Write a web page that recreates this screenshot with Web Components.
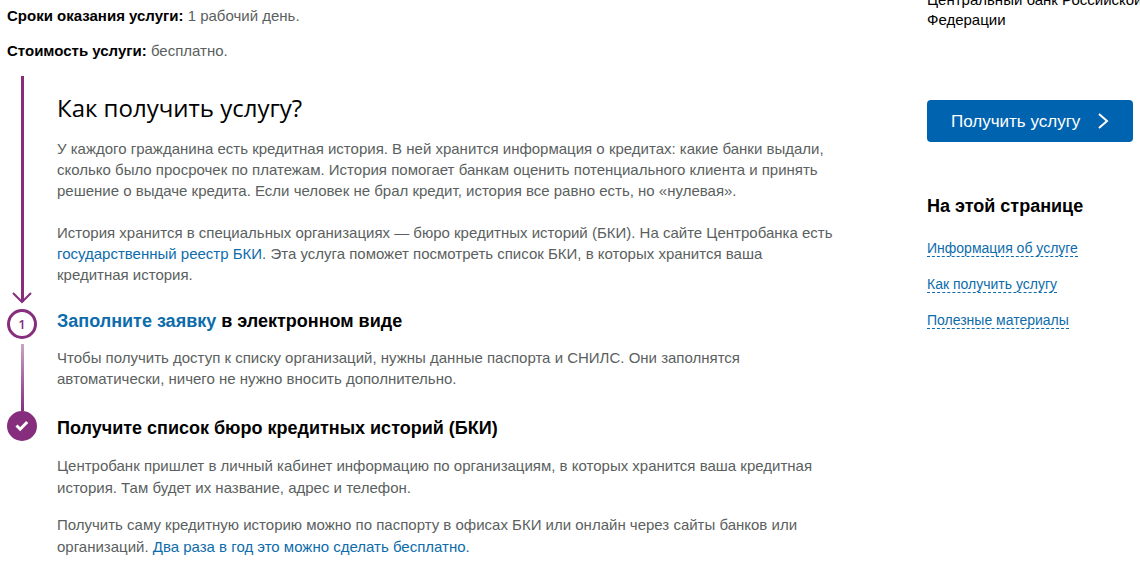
<!DOCTYPE html>
<html lang="ru">
<head>
<meta charset="utf-8">
<meta name="viewport" content="width=device-width, initial-scale=1">
<title>Получение списка бюро кредитных историй</title>
<style>
	body {
		margin: 0;
		background: #fff;
		color: #5b5f60;
		font: 15px/21px "Liberation Sans", Arial, sans-serif;
		overflow-x: hidden;
		--link: #0d6cab;
		--accent: #862d7e;
	}
</style>
</head>
<body>
<service-page>
	<service-fact label="Сроки оказания услуги:">1 рабочий день.</service-fact>
	<service-fact label="Стоимость услуги:">бесплатно.</service-fact>

	<step-item marker="intro">
		<h2 slot="title">Как получить услугу?</h2>
		<text-block>У каждого гражданина есть кредитная история. В ней хранится информация о кредитах: какие банки выдали, сколько было просрочек по платежам. История помогает банкам оценить потенциального клиента и принять решение о выдаче кредита. Если человек не брал кредит, история все равно есть, но «нулевая».</text-block>
		<text-block>История хранится в специальных организациях — бюро кредитных историй (БКИ). На сайте Центробанка есть <text-link href="#registry">государственный реестр БКИ</text-link>. Эта услуга поможет посмотреть список БКИ, в которых хранится ваша кредитная история.</text-block>
	</step-item>
	<step-item marker="number">
		<h3 slot="title"><text-link href="#apply">Заполните заявку</text-link> в электронном виде</h3>
		<text-block>Чтобы получить доступ к списку организаций, нужны данные паспорта и СНИЛС. Они заполнятся автоматически, ничего не нужно вносить дополнительно.</text-block>
	</step-item>
	<step-item marker="done">
		<h3 slot="title">Получите список бюро кредитных историй (БКИ)</h3>
		<text-block>Центробанк пришлет в личный кабинет информацию по организациям, в которых хранится ваша кредитная история. Там будет их название, адрес и телефон.</text-block>
		<text-block>Получить саму кредитную историю можно по паспорту в офисах БКИ или онлайн через сайты банков или организаций. <text-link href="#free">Два раза в год это можно сделать бесплатно.</text-link></text-block>
	</step-item>

	<service-aside slot="aside">
		<span slot="agency">Центральный банк Российской<br>Федерации</span>
		<action-button slot="action">Получить услугу</action-button>
		<page-nav heading="На этой странице"></page-nav>
	</service-aside>
</service-page>

<script>
(function(){
	'use strict';

	// attach an open shadow root and fill it from a template
	function render(host, html){
		const tmpl = document.createElement('template');
		tmpl.innerHTML = html.trim(); // outer whitespace would show up next to inline elements
		const root = host.attachShadow({mode: 'open'});
		root.appendChild(tmpl.content.cloneNode(true));
		return root;
	}

	customElements.define('service-page', class extends HTMLElement {
		constructor(){
			super();
			render(this, `
				<style>
					:host {
						display: grid;
						grid-template-columns: minmax(0, 1fr) 206px;
						column-gap: 90px;
						padding: 0 7px;
					}
					main {
						padding-top: 5px;
					}
				</style>
				<main><slot></slot></main>
				<slot name="aside"></slot>
			`);
		}
	});

	customElements.define('service-fact', class extends HTMLElement {
		constructor(){
			super();
			const root = render(this, `
				<style>
					:host {
						display: block;
						margin-bottom: 14px;
					}
					b {
						color: #000;
					}
				</style>
				<b></b> <slot></slot>
			`);
			root.querySelector('b').textContent = this.getAttribute('label');
		}
	});

	customElements.define('text-link', class extends HTMLElement {
		constructor(){
			super();
			const root = render(this, `
				<style>
					:host {
						display: inline;
					}
					a {
						color: var(--link);
						text-decoration: none;
					}
					a:hover {
						text-decoration: underline;
					}
				</style>
				<a><slot></slot></a>
			`);
			root.querySelector('a').href = this.getAttribute('href');
		}
	});

	customElements.define('text-block', class extends HTMLElement {
		constructor(){
			super();
			render(this, `
				<style>
					:host {
						display: block;
					}
					p {
						margin: 0;
					}
				</style>
				<p><slot></slot></p>
			`);
		}
	});

	// what is drawn in the left rail for each kind of step
	const markers = {
		intro: `
			<span class="line"></span>
			<svg class="arrow" width="20" height="12" viewBox="0 0 20 12" fill="none" stroke="currentColor" stroke-width="2">
				<path d="M1 1l9 9 9-9M10 0v10"/>
			</svg>`,
		number: `
			<span class="circle">1</span>
			<span class="line fade"></span>`,
		done: `
			<span class="circle full">
				<svg width="14" height="12" viewBox="0 0 14 12" fill="none" stroke="#fff" stroke-width="3">
					<path d="M1.500 5.500l3.700 3.700 7-7.200"/>
				</svg>
			</span>`
	};

	customElements.define('step-item', class extends HTMLElement {
		constructor(){
			super();
			render(this, `
				<style>
					:host {
						display: grid;
						grid-template-columns: 30px minmax(0, 1fr);
						column-gap: 20px;
					}
					.rail {
						display: flex;
						flex-direction: column;
						align-items: center;
						color: var(--accent);
					}
					.line {
						flex: 1;
						width: 3px;
						background: currentColor;
					}
					.fade {
						margin-top: 5px;
						background: linear-gradient(#c9a5c6, var(--accent));
					}
					.arrow {
						margin: -10px 0 5px;
					}
					.circle {
						box-sizing: border-box;
						display: flex;
						align-items: center;
						justify-content: center;
						width: 30px;
						height: 30px;
						border: 3px solid currentColor;
						border-radius: 50%;
						font: 600 13px/20px "Open Sans", "Noto Sans", sans-serif;
					}
					.full {
						background: var(--accent);
					}
					.body {
						display: flex;
						flex-direction: column;
						gap: 14px;
						padding-bottom: 22px;
					}
					:host([marker="intro"]) {
						padding-top: 1px;
					}
					:host([marker="intro"]) .body {
						gap: 21px;
						padding: 16px 0 24px;
					}
					:host([marker="done"]) .body {
						gap: 15px;
						padding: 5px 0 0;
						line-height: 22px;
					}
					::slotted(h2) {
						margin: 0 0 -7px;
						color: #000;
						font: 24px/32px "Open Sans", "Noto Sans", sans-serif;
					}
					::slotted(h3) {
						margin: 0;
						color: #000;
						font-size: 18px;
						line-height: 24px;
					}
				</style>
				<div class="rail">${markers[this.getAttribute('marker')]}</div>
				<div class="body"><slot name="title"></slot><slot></slot></div>
			`);
		}
	});

	customElements.define('service-aside', class extends HTMLElement {
		constructor(){
			super();
			render(this, `
				<style>
					:host {
						display: block;
						margin-top: -10px;
					}
					.agency {
						margin-bottom: 70px;
						color: #000;
						line-height: 20px;
						white-space: nowrap;
					}
				</style>
				<aside>
					<div class="agency"><slot name="agency"></slot></div>
					<slot name="action"></slot>
					<slot></slot>
				</aside>
			`);
		}
	});

	customElements.define('action-button', class extends HTMLElement {
		constructor(){
			super();
			render(this, `
				<style>
					:host {
						display: block;
					}
					button {
						display: flex;
						align-items: center;
						justify-content: space-between;
						width: 100%;
						height: 42px;
						padding: 0 24px;
						border: 0;
						border-radius: 4px;
						background: #0063b0;
						color: #fff;
						font: inherit;
						font-size: 17px;
						cursor: pointer;
					}
				</style>
				<button type="button">
					<slot></slot>
					<svg width="12" height="18" viewBox="0 0 12 18" fill="none" stroke="currentColor" stroke-width="2">
						<path d="M2 2l8 7-8 7"/>
					</svg>
				</button>
			`);
		}
	});

	customElements.define('page-nav', class extends HTMLElement {
		constructor(){
			super();
			const root = render(this, `
				<style>
					:host {
						display: block;
						margin-top: 52px;
					}
					h2 {
						margin: 0 0 20px;
						color: #000;
						font-size: 18px;
						line-height: 24px;
					}
					ul {
						display: flex;
						flex-direction: column;
						gap: 16px;
						margin: 0;
						padding: 0;
						list-style: none;
						font-size: 14px;
						line-height: 20px;
					}
					a {
						border-bottom: 1px dashed currentColor;
						color: var(--link);
						text-decoration: none;
					}
				</style>
				<nav>
					<h2></h2>
					<ul>
						<li><a href="#info">Информация об услуге</a></li>
						<li><a href="#how">Как получить услугу</a></li>
						<li><a href="#materials">Полезные материалы</a></li>
					</ul>
				</nav>
			`);
			root.querySelector('h2').textContent = this.getAttribute('heading');
		}
	});

}());
</script>
</body>
</html>
